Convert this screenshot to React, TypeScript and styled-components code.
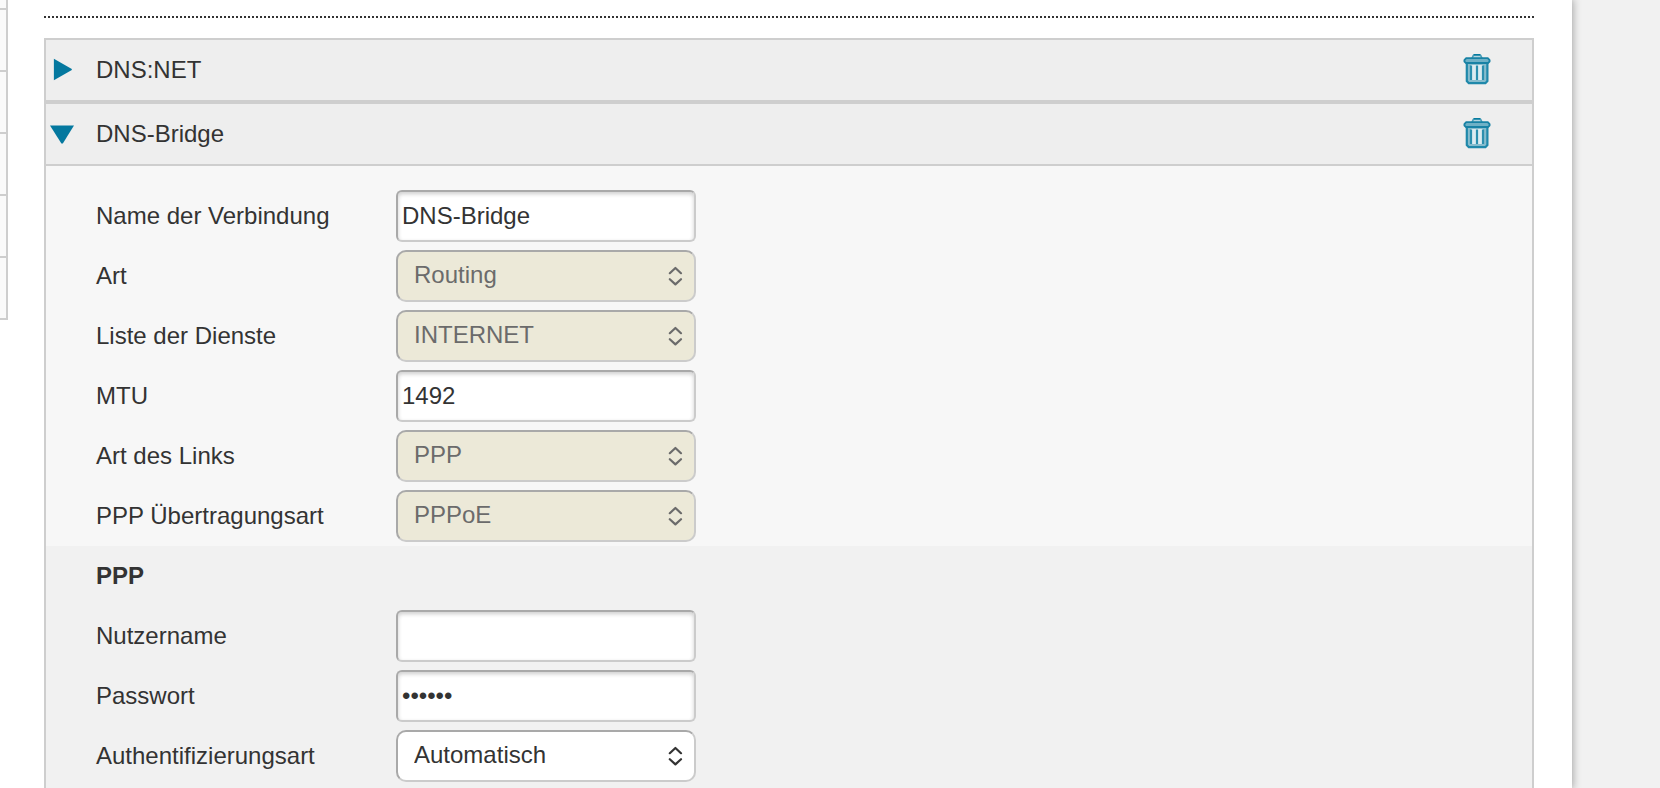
import React, { useState } from "react";
import styled, { createGlobalStyle, css } from "styled-components";

const GlobalStyle = createGlobalStyle`
  *, *::before, *::after { box-sizing: border-box; }
  html { background: #f1f1f1; }
  body {
    margin: 0;
    color: #333;
    font: 24px/28px "Liberation Sans", Arial, Helvetica, sans-serif;
  }
`;

const Page = styled.div`
  min-height: 100vh;
  padding-right: 88px;
  display: flex;
  overflow: hidden;
`;

const Sheet = styled.div`
  flex: 1;
  display: flex;
  align-items: stretch;
  background: #fff;
  box-shadow: 0 0 8px 1px rgba(0, 0, 0, 0.32);
`;

const SideMenu = styled.nav`
  flex: 0 0 8px;
  align-self: flex-start;
  background: #fafafa;
  border-right: 2px solid #cecece;
`;

const SideEntry = styled.div<{ $first?: boolean }>`
  height: ${(p) => (p.$first ? 10 : 62)}px;
  border-bottom: 2px solid #cecece;
`;

const Main = styled.main`
  flex: 1;
  display: flex;
  flex-direction: column;
  padding: 16px 38px 0 36px;
`;

const Divider = styled.hr`
  width: 100%;
  height: 2px;
  margin: 0 0 20px;
  border: 0;
  background: repeating-linear-gradient(90deg, #333 0 2px, transparent 2px 4px);
`;

const PanelHeader = styled.header`
  height: 64px;
  display: flex;
  align-items: center;
  justify-content: space-between;
  padding-right: 41px;
  background: #eee;
  border: 2px solid #cecece;
`;

const plainButton = css`
  padding: 0;
  border: 0;
  background: none;
  color: inherit;
  font: inherit;
  cursor: pointer;
`;

const Toggle = styled.button`
  ${plainButton}
  flex: 1;
  height: 100%;
  padding-left: 4px;
  display: flex;
  align-items: center;
  gap: 22px;
  text-align: left;
`;

const IconButton = styled.button`
  ${plainButton}
  display: flex;
`;

const PanelBody = styled.form`
  flex: 1;
  display: flex;
  flex-direction: column;
  background: #f7f7f7;
  border: solid #cecece;
  border-width: 0 2px;
`;

const Group = styled.section`
  padding: 20px 0 0 50px;
`;

const SubGroup = styled.section`
  flex: 1;
  padding-left: 50px;
  background: #f1f1f1;
`;

const GroupTitle = styled.h2`
  margin: 0;
  font-size: 24px;
  line-height: 60px;
`;

const Row = styled.div`
  height: 60px;
  display: flex;
  align-items: center;
`;

const Label = styled.label`
  flex: 0 0 300px;
`;

const fieldBox = css`
  width: 300px;
  height: 52px;
  margin: 0;
  border: 2px solid;
  border-color: #a9a9a9 #cbcbcb #cbcbcb #a9a9a9;
  background: #fff;
  color: #333;
  font: inherit;
  outline: none;
`;

const TextInput = styled.input`
  ${fieldBox}
  padding: 0 4px;
  border-radius: 6px;
  box-shadow: inset 0 2px 4px rgba(0, 0, 0, 0.2);
`;

const SelectWrap = styled.div`
  position: relative;
  display: flex;
`;

const Select = styled.select`
  ${fieldBox}
  appearance: none;
  padding: 0 40px 2px 16px;
  border-radius: 10px;

  &:disabled {
    background: #ece9d8;
    color: #6b6b6b;
    opacity: 1;
  }
`;

const Arrows = styled.svg<{ $muted: boolean }>`
  position: absolute;
  right: 13px;
  top: 16px;
  color: ${(p) => (p.$muted ? "#6b6b6b" : "#333")};
  pointer-events: none;
`;

function Triangle({ open }: { open: boolean }) {
  return (
    <svg width="24" height="24" viewBox="0 0 24 24" fill="#04789f" aria-hidden="true">
      <path d={open ? "M0 3.6H24L12.8 21.6H11.4Z" : "M3.9 .8L21.8 11V12L3.9 22.2Z"} />
    </svg>
  );
}

function TrashIcon() {
  return (
    <svg width="28" height="34" viewBox="0 0 28 34" fill="none" aria-hidden="true">
      <path d="M9 5.4L10.2 2.6Q10.6 1.8 11.4 1.8H16.6Q17.4 1.8 17.8 2.6L19 5.4" fill="#b5d5df" stroke="#4a9fb9" strokeWidth="1.6" />
      <path d="M10.8 1.8H17.2" stroke="#067b9f" strokeWidth="1.6" />
      <path d="M3.8 10H24.4V28L22.4 30.2H5.8L3.8 28Z" fill="#86bccd" stroke="#1f88aa" strokeWidth="2.2" />
      <path d="M8 12H20V27H8Z" fill="#dcebf0" />
      <path d="M8 12.4V27M14 12.4V27M20 12.4V27" stroke="#2c8fae" strokeWidth="2.2" />
      <path d="M3.2 5.2H24.8L26.6 7.2V8.6L25 10H3L1.4 8.6V7.2Z" fill="#6fb1c6" stroke="#1882a5" strokeWidth="1.8" strokeLinejoin="round" />
    </svg>
  );
}

function PanelHead(props: { title: string; open: boolean; onToggle: () => void }) {
  return (
    <PanelHeader>
      <Toggle type="button" aria-expanded={props.open} onClick={props.onToggle}>
        <Triangle open={props.open} />
        {props.title}
      </Toggle>
      <IconButton type="button" aria-label={`${props.title} löschen`}>
        <TrashIcon />
      </IconButton>
    </PanelHeader>
  );
}

function TextRow(props: { id: string; label: string; value?: string; type?: string }) {
  return (
    <Row>
      <Label htmlFor={props.id}>{props.label}</Label>
      <TextInput id={props.id} type={props.type ?? "text"} defaultValue={props.value} autoComplete="off" />
    </Row>
  );
}

function SelectRow(props: { id: string; label: string; value: string; disabled?: boolean }) {
  return (
    <Row>
      <Label htmlFor={props.id}>{props.label}</Label>
      <SelectWrap>
        <Select id={props.id} disabled={props.disabled}>
          <option>{props.value}</option>
        </Select>
        <Arrows
          $muted={!!props.disabled}
          width="16"
          height="20"
          viewBox="0 0 16 20"
          fill="none"
          stroke="currentColor"
          strokeWidth="2.2"
          strokeLinecap="round"
          strokeLinejoin="round"
          aria-hidden="true"
        >
          <path d="M2.8 7.2L8.4 2L14 7.2M2.8 13.2L8.4 18.4L14 13.2" />
        </Arrows>
      </SelectWrap>
    </Row>
  );
}

export default function App() {
  const [bridgeOpen, setBridgeOpen] = useState(true);
  const [netOpen, setNetOpen] = useState(false);

  return (
    <>
      <GlobalStyle />
      <Page>
        <Sheet>
          <SideMenu>
            <SideEntry $first />
            <SideEntry />
            <SideEntry />
            <SideEntry />
            <SideEntry />
            <SideEntry />
          </SideMenu>
          <Main>
            <Divider />
            <PanelHead title="DNS:NET" open={netOpen} onToggle={() => setNetOpen(!netOpen)} />
            <PanelHead title="DNS-Bridge" open={bridgeOpen} onToggle={() => setBridgeOpen(!bridgeOpen)} />
            {bridgeOpen && (
              <PanelBody>
                <Group>
                  <TextRow id="name" label="Name der Verbindung" value="DNS-Bridge" />
                  <SelectRow id="kind" label="Art" value="Routing" disabled />
                  <SelectRow id="services" label="Liste der Dienste" value="INTERNET" disabled />
                  <TextRow id="mtu" label="MTU" value="1492" />
                  <SelectRow id="link" label="Art des Links" value="PPP" disabled />
                  <SelectRow id="transport" label="PPP Übertragungsart" value="PPPoE" disabled />
                </Group>
                <SubGroup>
                  <GroupTitle>PPP</GroupTitle>
                  <TextRow id="user" label="Nutzername" />
                  <TextRow id="password" label="Passwort" type="password" value="secret" />
                  <SelectRow id="auth" label="Authentifizierungsart" value="Automatisch" />
                </SubGroup>
              </PanelBody>
            )}
          </Main>
        </Sheet>
      </Page>
    </>
  );
}
